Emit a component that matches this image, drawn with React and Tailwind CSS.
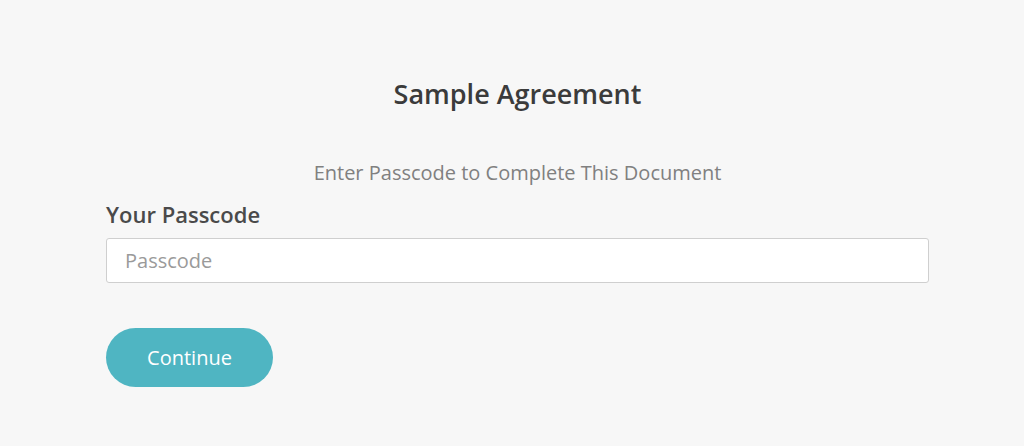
export default function App() {
  return (
    <div className="min-h-[446px] w-full bg-[#f7f7f7] font-['Open_Sans','Noto_Sans',sans-serif]">
      <div className="ml-[106px] w-[823px] pt-[77px] flex flex-col">
        <h1 className="text-center text-[27px] leading-[34px] font-semibold text-[#3b3b3b]">Sample Agreement</h1>
        <p className="mt-[50px] text-center text-[20px] leading-[24px] text-[#808080]">Enter Passcode to Complete This Document</p>
        <label className="mt-[16px] text-[22px] leading-[26px] font-semibold text-[#4a4a4a]">Your Passcode</label>
        <input
          className="mt-[11px] h-[45px] w-full rounded-[3px] border border-[#cfcfcf] bg-white px-[18px] text-[20px] text-[#555] placeholder:text-[#9a9a9a] outline-none"
          placeholder="Passcode"
        />
        <button className="mt-[45px] h-[59px] w-[167px] rounded-full bg-[#4fb5c2] text-[20px] font-medium text-white">Continue</button>
      </div>
    </div>
  );
}
